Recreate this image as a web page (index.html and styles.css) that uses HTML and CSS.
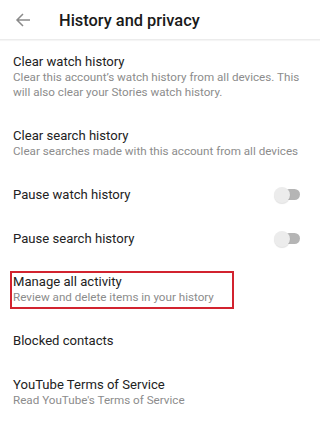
FILE: index.html
```html
<!DOCTYPE html>
<html>
<head>
<meta charset="utf-8">
<link rel="stylesheet" href="styles.css">
</head>
<body>
<header class="bar">
  <svg class="back" width="16" height="16" viewBox="0 0 16 16"><path d="M15 8H2M8 2L2 8l6 6" fill="none" stroke="#8a8a8a" stroke-width="1.5"/></svg>
  <h1 class="title">History and privacy</h1>
</header>
<main class="list">
  <div class="item">
    <div class="text">
      <div class="name">Clear watch history</div>
      <div class="desc">Clear this account’s watch history from all devices. This will also clear your Stories watch history.</div>
    </div>
  </div>
  <div class="item">
    <div class="text">
      <div class="name">Clear search history</div>
      <div class="desc">Clear searches made with this account from all devices</div>
    </div>
  </div>
  <div class="item row">
    <div class="name">Pause watch history</div>
    <span class="toggle"><span class="thumb"></span></span>
  </div>
  <div class="item row">
    <div class="name">Pause search history</div>
    <span class="toggle"><span class="thumb"></span></span>
  </div>
  <div class="item">
    <div class="text marked">
      <div class="name">Manage all activity</div>
      <div class="desc">Review and delete items in your history</div>
    </div>
  </div>
  <div class="item row">
    <div class="name">Blocked contacts</div>
  </div>
  <div class="item">
    <div class="text">
      <div class="name">YouTube Terms of Service</div>
      <div class="desc">Read YouTube's Terms of Service</div>
    </div>
  </div>
</main>
</body>
</html>
```
FILE: styles.css
```css
* { box-sizing: border-box; }
body {
  margin: 0;
  background: #fff;
  font-family: Roboto, "Noto Sans", Arial, sans-serif;
  color: #222;
  width: 320px;
  height: 426px;
  overflow: hidden;
}
.bar {
  height: 40px;
  display: flex;
  align-items: center;
  padding-left: 15px;
  border-bottom: 1px solid #ececec;
  box-shadow: 0 1px 1px rgba(0,0,0,0.04);
}
.back { flex: none; }
.title {
  margin: 1px 0 0 28px;
  font-size: 16.4px;
  font-weight: 500;
  color: #1a1a1a;
}
.list { display: flex; flex-direction: column; }
.item {
  padding: 13.5px 20px 13.5px 13px;
}
.row {
  display: flex;
  align-items: center;
  justify-content: space-between;
  height: 44px;
  padding-top: 0;
  padding-bottom: 0;
}
.name {
  font-size: 13.1px;
  line-height: 16px;
  color: #222;
}
.desc {
  font-size: 11.65px;
  line-height: 15.5px;
  color: #8c8c8c;
  max-width: 295px;
}
.marked {
  width: 218px;
  outline: 2px solid #d2232f;
  outline-offset: 1px;
}
.toggle {
  position: relative;
  width: 26px;
  height: 16px;
  display: flex;
  align-items: center;
  justify-content: flex-end;
}
.toggle::before {
  content: "";
  width: 21px;
  height: 11px;
  border-radius: 6px;
  background: #b5b5b5;
}
.thumb {
  position: absolute;
  left: 0;
  top: 0;
  width: 16px;
  height: 16px;
  border-radius: 50%;
  background: #ececec;
  box-shadow: 0 1px 1px rgba(0,0,0,0.12);
}
```
